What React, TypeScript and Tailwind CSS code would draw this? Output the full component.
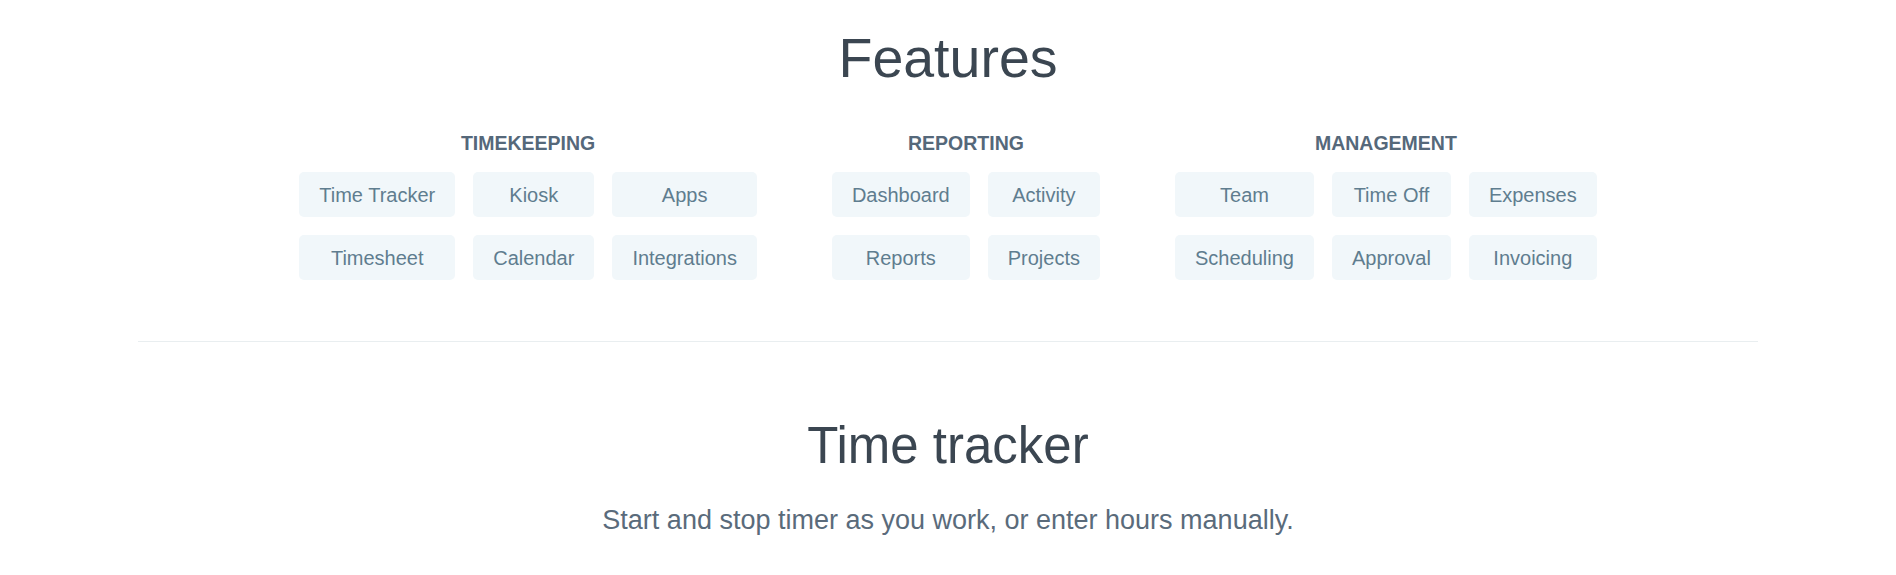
const groups = [
  {
    title: "TIMEKEEPING",
    cols: 3,
    items: ["Time Tracker", "Kiosk", "Apps", "Timesheet", "Calendar", "Integrations"],
  },
  {
    title: "REPORTING",
    cols: 2,
    items: ["Dashboard", "Activity", "Reports", "Projects"],
  },
  {
    title: "MANAGEMENT",
    cols: 3,
    items: ["Team", "Time Off", "Expenses", "Scheduling", "Approval", "Invoicing"],
  },
];

const FeatureGroup = ({ title, cols, items }: { title: string; cols: number; items: string[] }) => (
  <div className="flex flex-col items-center">
    <h3 className="text-[19.5px] leading-[24px] font-bold text-[#55687a] mt-px mb-[17px]">{title}</h3>
    <div className={`grid gap-[18px] ${cols === 3 ? "grid-cols-[repeat(3,auto)]" : "grid-cols-[repeat(2,auto)]"}`}>
      {items.map((item) => (
        <a
          key={item}
          href="#"
          className="block rounded-[5px] bg-[#f1f7fa] px-5 pt-[11px] pb-[9px] text-center text-[20px] leading-[25px] text-[#5f7d8f]"
        >
          {item}
        </a>
      ))}
    </div>
  </div>
);

export default function App() {
  return (
    <div className="min-h-[575px] bg-white font-['Liberation_Sans',Arial,sans-serif]">
      <section className="pt-[28px] pb-[61px]">
        <h1 className="text-center text-[55.5px] leading-[60px] text-[#3b4651] mb-[42px]">Features</h1>
        <div className="flex justify-center gap-[75px]">
          {groups.map((g) => (
            <FeatureGroup key={g.title} {...g} />
          ))}
        </div>
      </section>

      <div className="mx-[138px] border-t border-[#e9eef0]" />

      <section className="pt-[74px] text-center">
        <h2 className="text-[51px] leading-[60px] text-[#3b4651] mb-[26px]">Time tracker</h2>
        <p className="text-[27px] leading-[36px] text-[#5a6b7b]">
          Start and stop timer as you work, or enter hours manually.
        </p>
      </section>
    </div>
  );
}
